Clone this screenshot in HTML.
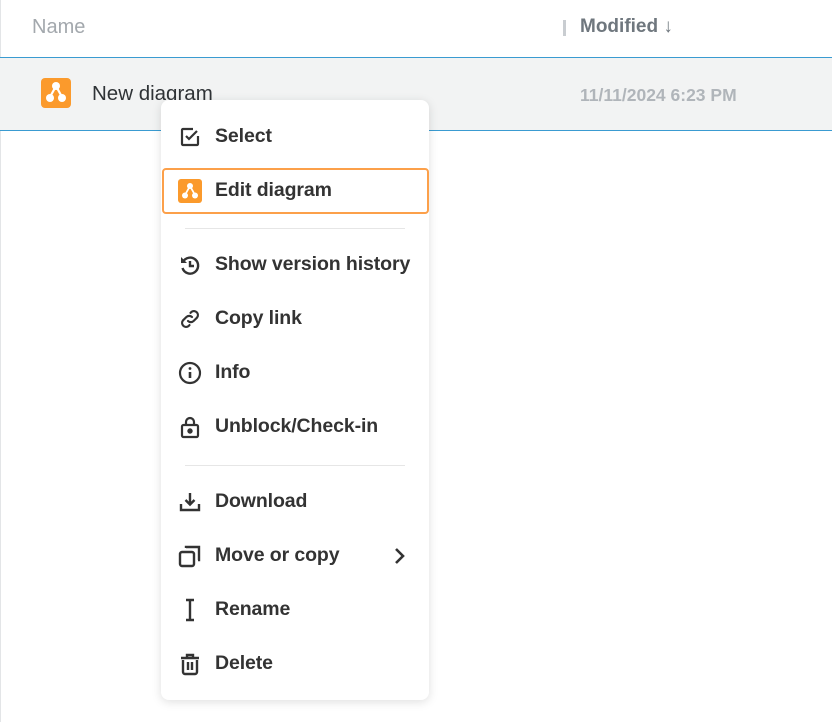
<!DOCTYPE html>
<html><head><meta charset="utf-8"><style>
*{margin:0;padding:0;box-sizing:border-box}
body{width:832px;height:722px;background:#fff;font-family:"Liberation Sans",sans-serif;position:relative;overflow:hidden}
.lft{position:absolute;left:0;top:0;width:1px;height:722px;background:#e3e5e7}
.hdr{position:absolute;top:0;left:0;width:832px;height:58px;border-bottom:1px solid #3a9bd1}
.name{position:absolute;left:32px;top:16px;font-size:20px;color:#a3a8ad}
.bar{position:absolute;left:563px;top:20px;width:3px;height:16px;background:#c9cdd1}
.mod{position:absolute;left:580px;top:16px;font-size:19px;color:#6f777e;font-weight:bold}
.row{position:absolute;top:58px;left:0;width:832px;height:73px;background:#f2f3f3;border-bottom:1px solid #3a9bd1}
.rn{position:absolute;left:92px;top:24px;font-size:20.5px;color:#2f3336}
.date{position:absolute;left:580px;top:27px;font-size:17.5px;font-weight:bold;color:#b0b5ba}
.menu{position:absolute;left:161px;top:100px;width:268px;height:600px;background:#fff;border-radius:8px;box-shadow:0 2px 10px rgba(0,0,0,.13)}
.it{position:absolute;left:0;width:268px;height:40px}
.it svg{position:absolute;left:17px;top:8px}
.it span{position:absolute;left:54px;top:8px;font-size:19.5px;font-weight:bold;color:#333;letter-spacing:-.1px;white-space:nowrap}
.sel{position:absolute;left:1px;top:68px;width:267px;height:46px;border:2.5px solid #fca04a;border-radius:4px}
.sep{position:absolute;left:24px;width:220px;height:1px;background:#e6e6e6}
</style></head><body>
<div class="lft"></div>
<div class="hdr"><div class="name">Name</div><div class="bar"></div><div class="mod">Modified <span style="font-weight:normal">↓</span></div></div>
<div class="row">
<svg style="position:absolute;left:41px;top:20px" width="30" height="30" viewBox="0 0 30 30"><rect width="30" height="30" rx="4" fill="#fb9a2c"/><path d="M15 8 L9 19 M15 8 L21 19" stroke="#fff" stroke-width="2.2"/><circle cx="15" cy="8" r="4" fill="#fff"/><circle cx="9" cy="20" r="4" fill="#fff"/><circle cx="21" cy="20" r="4" fill="#fff"/></svg>
<div class="rn">New diagram</div><div class="date">11/11/2024 6:23 PM</div></div>
<div class="menu">
<div class="it" style="top:17px"><svg width="24" height="24" viewBox="0 0 24 24" fill="none" stroke="#333" stroke-width="2.2"><path d="M20 11v8a1 1 0 0 1-1 1H5a1 1 0 0 1-1-1V5a1 1 0 0 1 1-1h10"/><path d="M8 11l3 3 8-8"/></svg><span>Select</span></div>
<div class="sel"></div>
<div class="it" style="top:71px"><svg width="24" height="24" viewBox="0 0 24 24"><rect width="24" height="24" rx="3" fill="#fb9a2c"/><path d="M12 7 L7 16 M12 7 L17 16" stroke="#fff" stroke-width="1.8"/><circle cx="12" cy="7" r="3" fill="#fff"/><circle cx="7" cy="16.5" r="3" fill="#fff"/><circle cx="17" cy="16.5" r="3" fill="#fff"/></svg><span>Edit diagram</span></div>
<div class="sep" style="top:128px"></div>
<div class="it" style="top:145px"><svg width="24" height="24" viewBox="0 0 24 24" fill="none" stroke="#333" stroke-width="2.4"><path d="M5 9a8 8 0 1 1-0.5 6"/><path d="M3 4v6h6" fill="#333" stroke="none"/><path d="M12 8v5h4"/></svg><span>Show version history</span></div>
<div class="it" style="top:199px"><svg width="24" height="24" viewBox="0 0 24 24" fill="none" stroke="#333" stroke-width="2.2" stroke-linecap="round"><path d="M10 14a4 4 0 0 0 5.6 0l3.5-3.5a4 4 0 0 0-5.6-5.6l-1 1"/><path d="M14 10a4 4 0 0 0-5.6 0l-3.5 3.5a4 4 0 0 0 5.6 5.6l1-1"/></svg><span>Copy link</span></div>
<div class="it" style="top:253px"><svg width="24" height="24" viewBox="0 0 24 24" fill="none" stroke="#333" stroke-width="2.2"><circle cx="12" cy="12" r="10"/><path d="M12 11v6" stroke-width="2.6"/><circle cx="12" cy="7.5" r="1.4" fill="#333" stroke="none"/></svg><span>Info</span></div>
<div class="it" style="top:307px"><svg width="24" height="24" viewBox="0 0 24 24" fill="none" stroke="#333" stroke-width="2.2"><rect x="4" y="10" width="16" height="12" rx="1.5"/><path d="M8 10V7a4 4 0 0 1 8 0v3"/><circle cx="12" cy="16" r="1.6" fill="#333"/></svg><span>Unblock/Check-in</span></div>
<div class="sep" style="top:365px"></div>
<div class="it" style="top:382px"><svg width="24" height="24" viewBox="0 0 24 24" fill="none" stroke="#333" stroke-width="2.4"><path d="M3 14v6h18v-6"/><path d="M12 3v11M7.5 10l4.5 4.5 4.5-4.5"/></svg><span>Download</span></div>
<div class="it" style="top:436px"><svg width="24" height="24" viewBox="0 0 24 24" fill="none" stroke="#333" stroke-width="2.4"><rect x="2" y="8" width="14" height="14" rx="2"/><path d="M8 4V3h13v13h-1"/></svg><span>Move or copy</span><svg style="left:232px;top:10px" width="14" height="20" viewBox="0 0 14 20" fill="none" stroke="#333" stroke-width="2.6"><path d="M3 3l7 7-7 7"/></svg></div>
<div class="it" style="top:490px"><svg width="24" height="24" viewBox="0 0 24 24" fill="none" stroke="#333" stroke-width="2.4"><path d="M8 2h8M12 2v20M8 22h8"/></svg><span>Rename</span></div>
<div class="it" style="top:544px"><svg width="24" height="24" viewBox="0 0 24 24" fill="none" stroke="#333" stroke-width="2.4"><path d="M3 6h18M9 5V3h6v2"/><path d="M5 8v12a2 2 0 0 0 2 2h10a2 2 0 0 0 2-2V8"/><path d="M10 10v8M14 10v8"/></svg><span>Delete</span></div>
</div>
</body></html>
